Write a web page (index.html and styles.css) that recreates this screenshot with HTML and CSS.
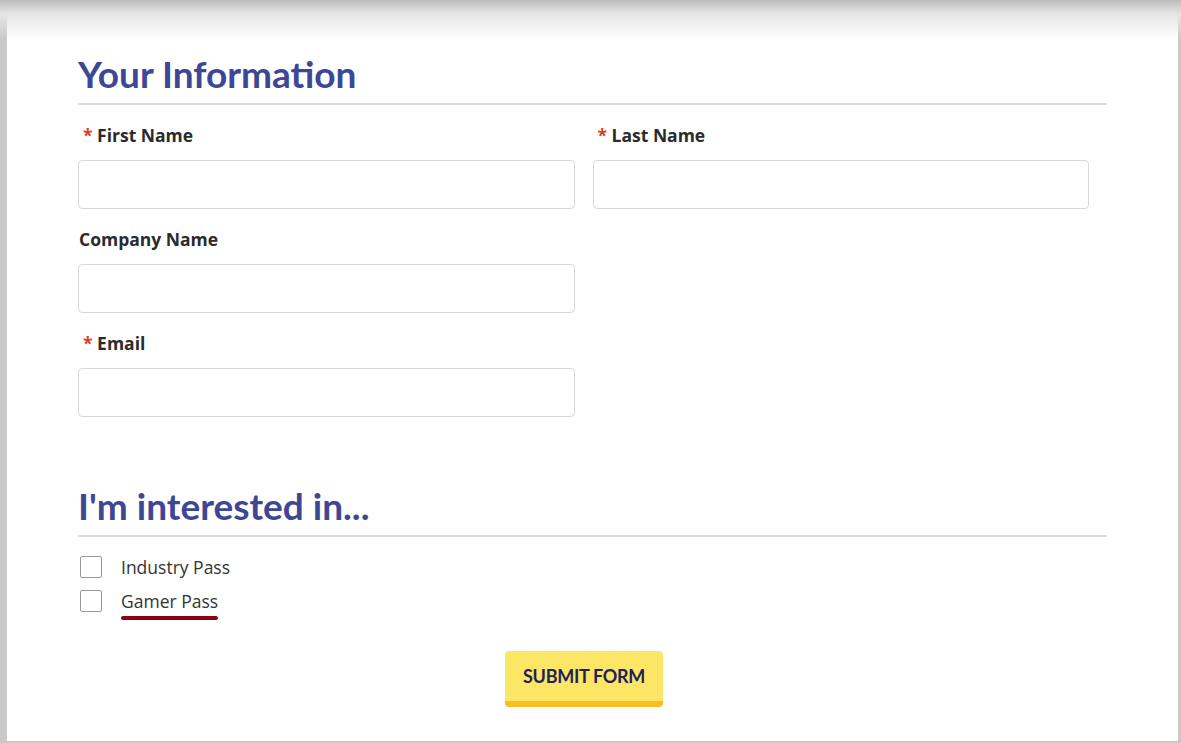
FILE: index.html
```html
<!DOCTYPE html>
<html>
<head>
<meta charset="utf-8">
<link rel="stylesheet" href="styles.css">
</head>
<body>
<div class="frame">
  <div class="shade"></div>
  <form class="form">
    <h2 class="section-title">Your Information</h2>
    <div class="grid">
      <div class="field">
        <label class="label"><span class="req">*</span> First Name</label>
        <input class="input" type="text">
      </div>
      <div class="field">
        <label class="label"><span class="req">*</span> Last Name</label>
        <input class="input" type="text">
      </div>
      <div class="field">
        <label class="label">Company Name</label>
        <input class="input" type="text">
      </div>
      <div class="field empty"></div>
      <div class="field">
        <label class="label"><span class="req">*</span> Email</label>
        <input class="input" type="text">
      </div>
    </div>

    <h2 class="section-title second">I'm interested in...</h2>
    <div class="checks">
      <label class="check"><span class="box"></span><span class="check-text">Industry Pass</span></label>
      <label class="check"><span class="box"></span><span class="check-text underlined">Gamer Pass</span></label>
    </div>
    <div class="actions">
      <button class="submit" type="button">SUBMIT FORM</button>
    </div>
  </form>
</div>
</body>
</html>
```
FILE: styles.css
```css
html, body {
  margin: 0;
  padding: 0;
}
body {
  width: 1181px;
  height: 743px;
  overflow: hidden;
  background: #c9c9c9;
  font-family: "Open Sans", "Liberation Sans", sans-serif;
}
.frame {
  position: relative;
  margin-left: 7px;
  width: 1171px;
  height: 741px;
  background: #ffffff;
}
.shade {
  position: absolute;
  top: 0;
  left: -7px;
  right: -3px;
  height: 40px;
  background: linear-gradient(to bottom, #bcbcbc 0%, #e6e6e6 35%, rgba(255,255,255,0) 100%);
  pointer-events: none;
}
.form {
  padding: 0 0 0 71px;
  width: 1029px;
}
.section-title {
  margin: 0;
  padding-top: 52px;
  padding-bottom: 8px;
  border-bottom: 2px solid #dcdcdc;
  font-family: "Lato", "Liberation Sans", sans-serif;
  font-weight: 700;
  font-size: 37px;
  line-height: 43px;
  color: #3e4795;
}
.section-title.second {
  padding-top: 67px;
}
.grid {
  display: grid;
  grid-template-columns: 1fr 1fr;
  padding-top: 18px;
  row-gap: 18px;
}
.field {
  padding-right: 18px;
  display: flex;
  flex-direction: column;
}
.label {
  font-weight: 700;
  font-size: 17.5px;
  line-height: 24px;
  color: #2b2b2b;
  padding-left: 1px;
  margin-bottom: 13px;
}
.req {
  color: #de3a22;
  margin-left: 4px;
}
.input {
  box-sizing: border-box;
  height: 49px;
  width: 100%;
  border: 1px solid #d8d8d8;
  border-radius: 4px;
  background: #fff;
  margin: 0;
}
.checks {
  padding-top: 19px;
  display: flex;
  flex-direction: column;
  gap: 12px;
}
.check {
  display: flex;
  align-items: center;
  height: 22px;
  font-size: 17.5px;
  color: #333;
}
.box {
  box-sizing: border-box;
  width: 22px;
  height: 22px;
  border: 1px solid #9a9a9a;
  border-radius: 2px;
  margin-left: 2px;
  margin-right: 19px;
  background: #fff;
}
.check-text {
  position: relative;
  line-height: 22px;
}
.underlined::after {
  content: "";
  position: absolute;
  left: 0;
  right: 0;
  bottom: -8px;
  height: 4px;
  border-radius: 2px;
  background: #8b0016;
}
.actions {
  padding-top: 39px;
  padding-left: 427px;
}
.submit {
  box-sizing: border-box;
  width: 158px;
  height: 56px;
  background: #fde566;
  border: none;
  border-bottom: 6px solid #fbbd22;
  border-radius: 4px;
  font-family: "Lato", "Liberation Sans", sans-serif;
  font-weight: 700;
  font-size: 18px;
  color: #1f2157;
  letter-spacing: -0.3px;
  padding: 0;
  cursor: pointer;
}
```
